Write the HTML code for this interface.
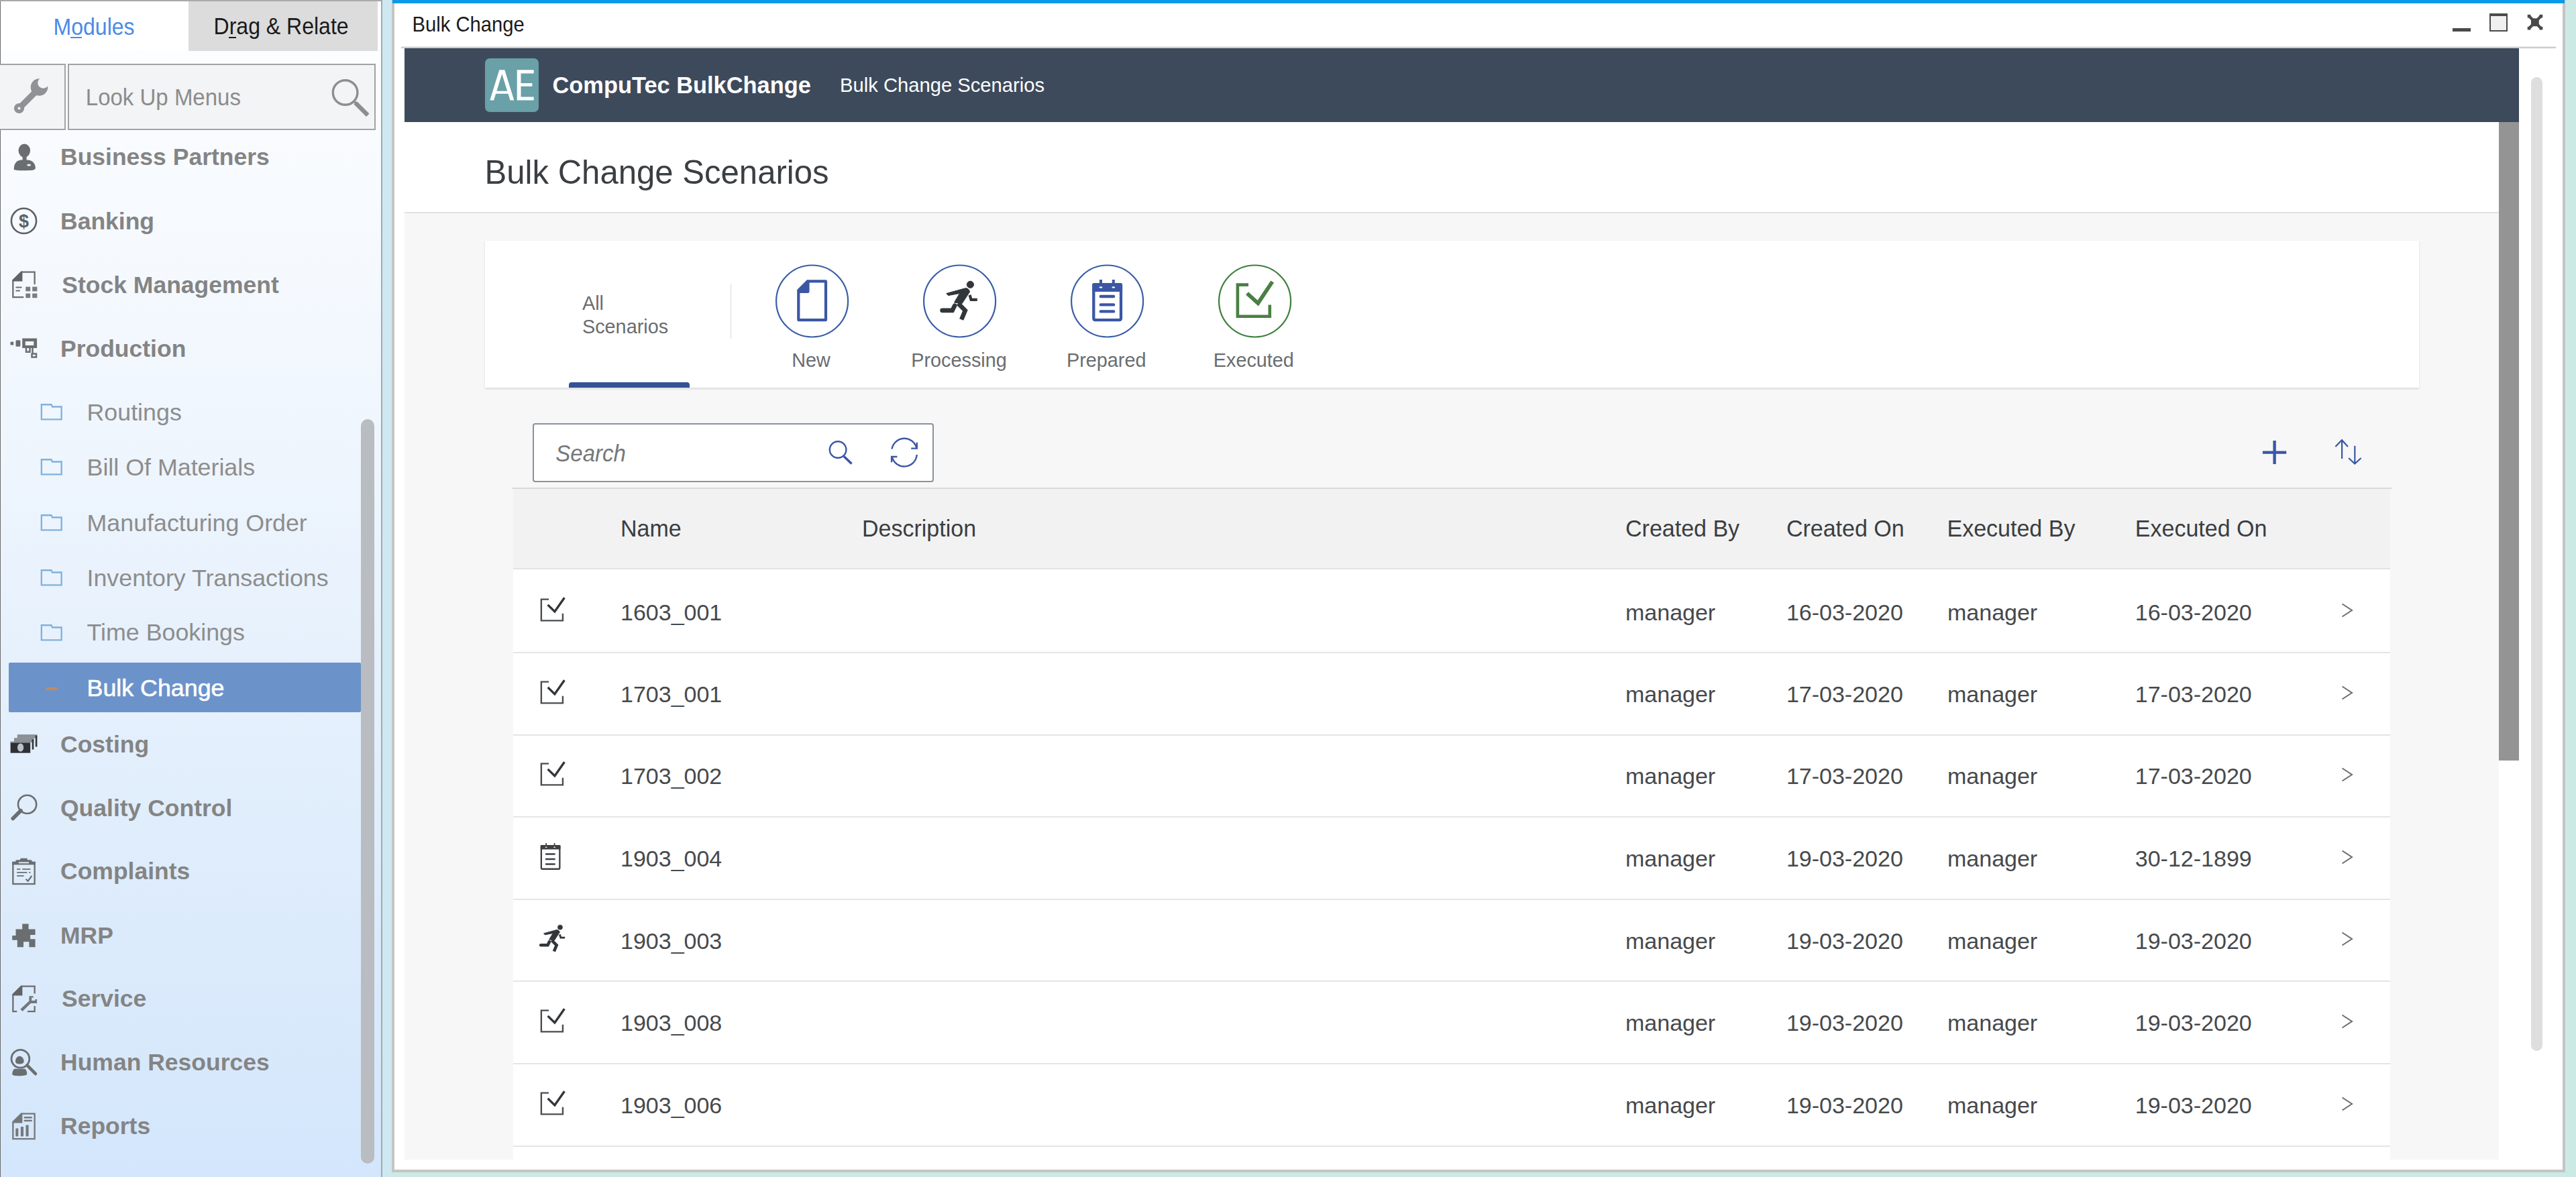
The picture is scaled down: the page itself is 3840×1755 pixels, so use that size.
<!DOCTYPE html>
<html><head><meta charset="utf-8">
<style>
html,body{margin:0;padding:0;width:3840px;height:1755px;overflow:hidden;position:relative;background:#cde9e6;font-family:"Liberation Sans",sans-serif}
.a{position:absolute}
.t{position:absolute;line-height:1;white-space:nowrap;font-family:"Liberation Sans",sans-serif}
.mi{font-size:35.5px;font-weight:bold;color:#848484;left:90px}
.si{font-size:35.8px;color:#8d8d8d;left:129.5px}
.hd{font-size:34px;color:#3a3e42;transform:scaleY(1.03);transform-origin:0 28.8px}
.cell{font-size:34px;color:#46494c}
.lab{font-size:28.8px;color:#6a6d70}
svg{position:absolute;overflow:visible}
</style></head><body>

<!-- ============ LEFT PANEL ============ -->
<div class="a" id="left" style="left:0;top:0;width:570px;height:1755px;background:linear-gradient(#fdfeff 0px,#f3f8fe 500px,#e3effc 1100px,#d3e6fb 1755px)"></div>
<div class="a" style="left:0;top:0;width:1px;height:1755px;background:#6b6b6b"></div>
<div class="a" style="left:0;top:0;width:570px;height:2px;background:#a9a9a9"></div>
<!-- tabs -->
<div class="a" style="left:1px;top:2px;width:280px;height:74px;background:#fff"></div>
<div class="a" style="left:281px;top:2px;width:282px;height:74px;background:#dcdcdc"></div>
<div class="t" style="left:79.6px;top:25px;font-size:32px;color:#4a8be6;transform:scaleY(1.1);transform-origin:0 27px">Modules</div>
<div class="a" style="left:105px;top:54.8px;width:17px;height:1.8px;background:#4a8be6"></div>
<div class="t" style="left:318.6px;top:24px;font-size:32px;color:#1a1a1a;transform:scaleY(1.1);transform-origin:0 27px">Drag &amp; Relate</div>
<div class="a" style="left:341px;top:54.8px;width:11px;height:1.8px;background:#1a1a1a"></div>
<!-- wrench box + lookup -->
<div class="a" style="left:0;top:95px;width:95.5px;height:95px;border:2px solid #a3a3a3;border-left:none;background:#f3f4f6"></div>
<div class="a" style="left:101px;top:95px;width:455px;height:95px;border:2px solid #a3a3a3;background:#f3f4f6"></div>
<div class="t" style="left:127.8px;top:129.2px;font-size:33px;color:#8c8c8c;transform:scaleY(1.08);transform-origin:0 28px">Look Up Menus</div>

<!-- menu items -->
<div class="t mi" style="top:217.3px">Business Partners</div>
<div class="t mi" style="top:313px">Banking</div>
<div class="t mi" style="top:407.5px;left:92.3px">Stock Management</div>
<div class="t mi" style="top:503px">Production</div>
<div class="t si" style="top:597.6px">Routings</div>
<div class="t si" style="top:680px">Bill Of Materials</div>
<div class="t si" style="top:763px">Manufacturing Order</div>
<div class="t si" style="top:844.7px">Inventory Transactions</div>
<div class="t si" style="top:926.3px">Time Bookings</div>
<div class="a" style="left:13px;top:988px;width:525px;height:74px;border-radius:2px;background:#6b93ca"></div>
<div class="a" style="left:68.5px;top:1025.2px;width:17.4px;height:4.2px;background:#c48a5c"></div>
<div class="t si" style="top:1009.4px;color:#fff;-webkit-text-stroke:0.6px #fff">Bulk Change</div>
<div class="t mi" style="top:1093px">Costing</div>
<div class="t mi" style="top:1187.8px">Quality Control</div>
<div class="t mi" style="top:1281.6px">Complaints</div>
<div class="t mi" style="top:1377.5px">MRP</div>
<div class="t mi" style="top:1471.8px;left:92px">Service</div>
<div class="t mi" style="top:1567px">Human Resources</div>
<div class="t mi" style="top:1662.3px">Reports</div>

<!-- left icons -->
<svg style="left:10px;top:205px" width="60" height="60" viewBox="0 0 60 60"><g fill="#6b6e70"><ellipse cx="26.3" cy="19.6" rx="8.8" ry="10.2"/><rect x="23.6" y="26" width="6" height="9"/><path d="M10.7 47 C10.7 38.5 15.5 33.5 22 33.5 H31 C38 33.5 42.8 38.5 42.8 45.5 C42.8 49 37 49.2 26.5 49.2 C15 49.2 10.7 49 10.7 47 Z"/></g><rect x="30.6" y="39.8" width="5.1" height="2.6" fill="#f5f8fc"/></svg>
<svg style="left:10px;top:300px" width="60" height="60" viewBox="0 0 60 60"><circle cx="25.5" cy="29.4" r="18.6" fill="none" stroke="#5e6163" stroke-width="2.6"/><text x="25.5" y="38.6" text-anchor="middle" font-family="Liberation Sans" font-weight="bold" font-size="27" fill="#5e6163">$</text></svg>
<svg style="left:10px;top:395px" width="60" height="60" viewBox="0 0 60 60"><g fill="none" stroke="#6b6e70" stroke-width="2.3"><path d="M9.35 23.5 V48.05 H25.2"/><path d="M22.2 10.55 H41.65 V29"/></g><path d="M8.2 22.5 L21.3 9.4 H23.4 V24.6 H8.2 Z" fill="#616466"/><g fill="#6b6e70"><rect x="13.3" y="32.6" width="9.4" height="2" rx="1"/><rect x="13.3" y="37.4" width="6.8" height="2" rx="1"/></g><g fill="#7b7e81"><rect x="28.3" y="32.6" width="6.9" height="6.7"/><rect x="38.2" y="32.6" width="7.2" height="6.7"/><rect x="28.3" y="42.6" width="6.9" height="6.6"/><rect x="38.2" y="42.6" width="7.2" height="6.6"/></g></svg>
<svg style="left:10px;top:490px" width="60" height="60" viewBox="0 0 60 60"><g fill="#6b6e70"><rect x="5.6" y="19.6" width="4.6" height="4.9"/><rect x="13.5" y="17.3" width="6.9" height="9.5" rx="1.5"/><path fill-rule="evenodd" d="M23.2 14.5 H45.1 V29.1 H23.2 Z M27.8 19.1 V25 H40.3 V19.1 Z"/></g><g fill="none" stroke="#6b6e70" stroke-width="2.5"><path d="M29 29 V34.8 H34.5 V29"/><path d="M38.5 29 V37.5 H44 V42.6 H37.5 V36.5"/></g></svg>

<svg style="left:10px;top:1085px" width="60" height="60" viewBox="0 0 60 60"><rect x="15.8" y="10.2" width="29.6" height="5.6" fill="#8b9096"/><rect x="42.8" y="11.7" width="2.6" height="16.8" fill="#33363a"/><rect x="11" y="15.3" width="29.3" height="6.6" fill="#8b9096"/><rect x="37.7" y="17.3" width="2.6" height="15.3" fill="#33363a"/><rect x="5.6" y="21.4" width="29.6" height="16.3" fill="#2e3134"/><rect x="5.6" y="20.6" width="29.6" height="2" fill="#8b9096"/><ellipse cx="20.6" cy="29.6" rx="4.6" ry="6.2" fill="#b9c3cc"/></svg>
<svg style="left:10px;top:1180px" width="60" height="60" viewBox="0 0 60 60"><circle cx="30.6" cy="19.4" r="13.6" fill="none" stroke="#6b6e70" stroke-width="2.6"/><path d="M21 28.8 L9.2 40.6" stroke="#6b6e70" stroke-width="5.6" stroke-linecap="round"/></svg>
<svg style="left:10px;top:1270px" width="60" height="60" viewBox="0 0 60 60"><rect x="9.35" y="16" width="32.3" height="32.05" fill="none" stroke="#6b6e70" stroke-width="2.3"/><rect x="8.2" y="14.8" width="34.6" height="4.6" fill="#6b6e70"/><rect x="13.3" y="12.2" width="24.4" height="3.5" rx="1.5" fill="#6b6e70"/><rect x="20" y="9.7" width="11" height="3.5" rx="1.5" fill="#6b6e70"/><rect x="17.8" y="15.4" width="15.2" height="1.9" fill="#e6effa"/><g stroke="#7a7d80" stroke-width="2.1" stroke-linecap="round"><path d="M16 26 H19.5 M24 26 H34.5 M16 31 H29.6 M34 31 H34.6 M16 36 H24.8"/></g><path d="M28.6 40.8 L31.6 43.8 L37.3 36" fill="none" stroke="#6b6e70" stroke-width="2.2"/></svg>
<svg style="left:10px;top:1365px" width="60" height="60" viewBox="0 0 60 60"><path d="M23.2 12.5 H32.6 V20.4 H42.6 V29.1 H35.2 V35.2 H42.6 V47.2 H33.4 V39.3 H25 V47.2 H15.8 V36.7 H8.2 V30.1 H13.5 V20.4 H23.2 Z" fill="#6b6e70"/></svg>
<svg style="left:10px;top:1460px" width="60" height="60" viewBox="0 0 60 60"><path d="M8.2 22.5 L21.3 9.4 H23.4 V24.6 H8.2 Z" fill="#616466"/><g fill="none" stroke="#6b6e70" stroke-width="2.3"><path d="M22.2 10.55 H41.65 V21.5"/><path d="M9.35 23.5 V48.05 H15.3"/><path d="M31 48.05 H41.65 V40"/></g><path d="M33.4 25.2 H39.8 V27.6 H37.2 V31.9 H42.3 V29.9 H45.1 V36 H35.8 L23.6 48 L20.3 44.8 L33.4 32.4 Z" fill="#74777a"/></svg>
<svg style="left:10px;top:1555px" width="60" height="60" viewBox="0 0 60 60"><circle cx="20.4" cy="23.7" r="13.4" fill="none" stroke="#6b6e70" stroke-width="2.8"/><path d="M19.2 19.8 C23 19.8 25.6 24 25.6 27.3 C25.6 30.6 23 31.6 19.2 31.6 C15.4 31.6 13 30.6 13 27.3 C13 24 15.4 19.8 19.2 19.8 Z" fill="#6b6e70"/><path d="M11.5 38.7 H27 C29.5 40 30.2 44 30.2 46 C30.2 48.6 25 49.2 19 49.2 C12.5 49.2 8.2 48.6 8.2 46.5 C8.2 43.5 9.5 40 11.5 38.7 Z" fill="#6b6e70"/><path d="M30.4 33.4 L43 46.2" stroke="#6b6e70" stroke-width="4.6" stroke-linecap="round"/></svg>
<svg style="left:10px;top:1650px" width="60" height="60" viewBox="0 0 60 60"><path d="M8.2 22.5 L21.3 9.4 H23.4 V24.6 H8.2 Z" fill="#75787b"/><path d="M22.2 10.55 H41.65 V48.05 H9.35 V23.5" fill="none" stroke="#75787b" stroke-width="2.3"/><g stroke="#75787b" stroke-width="2.4" stroke-linecap="round"><path d="M26.8 16.3 H36.8 M26.8 21 H36.8"/></g><g fill="#75787b"><rect x="13.3" y="32.6" width="4" height="11.8" rx="0.8"/><rect x="20.9" y="30.1" width="4.1" height="14.3" rx="0.8"/><rect x="28.5" y="27.5" width="4.1" height="16.9" rx="0.8"/></g></svg>

<!-- folders -->
<svg style="left:50px;top:584.9px" width="60" height="60" viewBox="0 0 60 60"><path d="M11.85 18.25 H26.5 L28 21.5 H41.65 V40.35 H11.85 Z" fill="none" stroke="#80b1dc" stroke-width="2.3" stroke-linejoin="miter"/></svg>
<svg style="left:50px;top:667.3px" width="60" height="60" viewBox="0 0 60 60"><path d="M11.85 18.25 H26.5 L28 21.5 H41.65 V40.35 H11.85 Z" fill="none" stroke="#80b1dc" stroke-width="2.3" stroke-linejoin="miter"/></svg>
<svg style="left:50px;top:750.3px" width="60" height="60" viewBox="0 0 60 60"><path d="M11.85 18.25 H26.5 L28 21.5 H41.65 V40.35 H11.85 Z" fill="none" stroke="#80b1dc" stroke-width="2.3" stroke-linejoin="miter"/></svg>
<svg style="left:50px;top:832.0px" width="60" height="60" viewBox="0 0 60 60"><path d="M11.85 18.25 H26.5 L28 21.5 H41.65 V40.35 H11.85 Z" fill="none" stroke="#80b1dc" stroke-width="2.3" stroke-linejoin="miter"/></svg>
<svg style="left:50px;top:913.6px" width="60" height="60" viewBox="0 0 60 60"><path d="M11.85 18.25 H26.5 L28 21.5 H41.65 V40.35 H11.85 Z" fill="none" stroke="#80b1dc" stroke-width="2.3" stroke-linejoin="miter"/></svg>
<!-- wrench -->
<svg style="left:0;top:95px" width="100" height="100" viewBox="0 0 100 100"><path d="M29 66 L54 41" stroke="#909295" stroke-width="9" stroke-linecap="round"/><circle cx="28.5" cy="66.5" r="7.6" fill="#909295"/><circle cx="28.5" cy="66.5" r="2" fill="#f3f4f6"/><circle cx="58.5" cy="35" r="12.8" fill="#909295"/><circle cx="64.5" cy="28.5" r="8.3" fill="#f3f4f6"/></svg>
<!-- lookup search icon -->
<svg style="left:480px;top:100px" width="80" height="90" viewBox="0 0 80 90"><circle cx="34.6" cy="38" r="18.3" fill="none" stroke="#8e8e8e" stroke-width="3.4"/><path d="M47.5 51 L52 55.5" stroke="#8e8e8e" stroke-width="3.4"/><path d="M52 55.5 L66 69.5" stroke="#8e8e8e" stroke-width="6.5" stroke-linecap="square"/></svg>

<!-- left scrollbar + border -->
<div class="a" style="left:537.5px;top:624.5px;width:20.5px;height:1110px;border-radius:10px;background:#b9bcc0"></div>
<div class="a" style="left:567.8px;top:0;width:2.2px;height:1755px;background:#a3a9ae"></div>
<div class="a" style="left:570px;top:0;width:13.5px;height:1755px;background:#cde8f1"></div>

<!-- ============ WINDOW ============ -->
<div class="a" id="win" style="left:583.5px;top:0;width:3240.5px;height:1748px;background:#fff;box-sizing:border-box;border:4px solid #c4c4c4;border-top:none"></div>
<div class="a" style="left:585px;top:0;width:3238px;height:4.6px;background:#0a9be8"></div>
<div class="t" style="left:614.5px;top:22.8px;font-size:29.2px;color:#1a1a1a;transform:scaleY(1.06);transform-origin:0 24.7px">Bulk Change</div>
<!-- window controls -->
<div class="a" style="left:3655.5px;top:41.5px;width:27px;height:5px;background:#4a4a4a"></div>
<div class="a" style="left:3710.7px;top:19.5px;width:27px;height:27px;box-sizing:border-box;border:2px solid #4a4a4a;border-top-width:4px;background:#f0f0f0"></div>
<svg style="left:3767px;top:22px" width="24" height="23" viewBox="0 0 24 23"><g fill="#4a4a4a"><rect x="0.7" y="-0.2" width="4.7" height="4.7"/><rect x="18.6" y="-0.2" width="4.7" height="4.7"/><rect x="0.7" y="17.8" width="4.7" height="4.7"/><rect x="18.6" y="17.8" width="4.7" height="4.7"/><rect x="6" y="5.4" width="11.8" height="11.8"/></g><path d="M3 2 L20.9 20.2 M20.9 2 L3 20.2" stroke="#4a4a4a" stroke-width="4.2"/></svg>

<div class="a" style="left:598px;top:69px;width:3212px;height:3px;background:linear-gradient(#f0f0f0,#b9b9b9)"></div>
<!-- dark header -->
<div class="a" style="left:603px;top:72px;width:3152px;height:110px;background:#3d4a5c"></div>
<div class="a" style="left:723px;top:87px;width:80px;height:80px;border-radius:7px;background:#6aa0a8"></div>
<svg style="left:715px;top:80px" width="100" height="95" viewBox="0 0 100 95"><path fill="#fff" fill-rule="evenodd" d="M15.3 69.4 L29.3 24.2 H37.3 L51.3 69.4 H45.5 L42.5 59.7 H24.1 L21.1 69.4 Z M25.4 55.7 H41.2 L33.3 30.2 Z"/><path fill="#fff" d="M55.7 24.2 H80.7 V29.4 H61.5 V44 H78.4 V48.8 H61.5 V64.6 H80.7 V69.4 H55.7 Z"/></svg>
<div class="t" style="left:823.5px;top:110px;font-size:34.4px;font-weight:bold;color:#fff;transform:scaleY(1.03);transform-origin:0 29px">CompuTec BulkChange</div>
<div class="t" style="left:1252px;top:113.3px;font-size:29.2px;color:#fff">Bulk Change Scenarios</div>

<!-- content -->
<div class="a" style="left:603px;top:182px;width:3122px;height:135px;background:#fff"></div>
<div class="a" style="left:603px;top:317px;width:3122px;height:1412px;background:#f7f7f7"></div>
<div class="a" style="left:603px;top:316px;width:3122px;height:2px;background:#e2e2e2"></div>
<div class="t" style="left:722.5px;top:233px;font-size:49.1px;color:#3b3f43">Bulk Change Scenarios</div>

<!-- inner scrollbar -->
<div class="a" style="left:3725px;top:182px;width:30px;height:952px;background:#949494"></div>
<!-- outer scrollbar -->
<div class="a" style="left:3773px;top:115px;width:17px;height:1452px;border-radius:9px;background:#dedede"></div>

<!-- tab card -->
<div class="a" style="left:723px;top:359px;width:2883px;height:218.5px;background:#fff;box-shadow:0 2px 3px rgba(0,0,0,0.12)"></div>
<div class="t lab" style="left:868px;top:438.1px">All</div>
<div class="t lab" style="left:868px;top:472.6px">Scenarios</div>
<div class="a" style="left:1088.5px;top:424px;width:1.5px;height:81px;background:#d9d9d9"></div>
<div class="a" style="left:848px;top:570px;width:180px;height:7.5px;border-radius:4px 4px 0 0;background:#345296"></div>

<!-- circles -->
<svg style="left:1156px;top:394px" width="110" height="110"><circle cx="54.6" cy="55" r="53.5" fill="none" stroke="#3a5ea8" stroke-width="2.2"/></svg>
<svg style="left:1376px;top:394px" width="110" height="110"><circle cx="54.6" cy="55" r="53.5" fill="none" stroke="#3a5ea8" stroke-width="2.2"/></svg>
<svg style="left:1596px;top:394px" width="110" height="110"><circle cx="54.6" cy="55" r="53.5" fill="none" stroke="#3a5ea8" stroke-width="2.2"/></svg>
<svg style="left:1816px;top:394px" width="110" height="110"><circle cx="54.6" cy="55" r="53.5" fill="none" stroke="#3f7f3f" stroke-width="2.2"/></svg>
<div class="t lab" style="left:1180.3px;top:523.1px">New</div>
<div class="t lab" style="left:1358.3px;top:523.1px">Processing</div>
<div class="t lab" style="left:1590px;top:523.1px">Prepared</div>
<div class="t lab" style="left:1808.8px;top:523.1px">Executed</div>

<!-- toolbar -->
<div class="a" style="left:794px;top:630.5px;width:598px;height:88px;box-sizing:border-box;border:2px solid #89929c;border-radius:4px;background:#fff"></div>
<div class="t" style="left:828.3px;top:659.6px;font-size:33px;font-style:italic;color:#74777a;transform:scaleY(1.05);transform-origin:0 28px">Search</div>

<!-- defs -->
<svg width="0" height="0" style="position:absolute"><defs>
<symbol id="runner" viewBox="0 0 120 120"><circle cx="76.4" cy="34.3" r="5.1"/><path d="M40.8 47.6 L68 40 Q72.5 38.8 74.5 42.5 L75.6 45 L64 62.8 L52.5 61 L60.5 47.5 L43.6 50.6 Z"/><path d="M75.6 49.8 L77.6 56.8 H86.8" fill="none" stroke-width="4.2"/><path d="M53.2 65.6 L49.6 72.9 H34.6" fill="none" stroke-width="6.6" stroke-linecap="round"/><path d="M58.2 62.4 L68.8 73 L63.2 86.4" fill="none" stroke-width="6.6"/></symbol>
<symbol id="chkrow" viewBox="0 0 60 60"><path d="M23 13.65 H11.85 V45.35 H43.95 V34.7" fill="none" stroke="#4a4d50" stroke-width="2.4"/><path d="M21.6 21.9 L31.9 32 L46.4 11.2" fill="none" stroke="#32363a" stroke-width="3.4"/></symbol>
<symbol id="calrow" viewBox="0 0 60 60"><rect x="11.85" y="13.2" width="27.5" height="34.55" rx="1.2" fill="none" stroke="#3d4043" stroke-width="2.3"/><rect x="10.7" y="12" width="29.8" height="6.6" rx="1" fill="#3d4043"/><rect x="18.2" y="9.2" width="1.8" height="4" fill="#3d4043"/><rect x="30.7" y="9.2" width="1.8" height="4" fill="#3d4043"/><ellipse cx="19.1" cy="15.3" rx="1.5" ry="0.8" fill="#fff"/><ellipse cx="31.6" cy="15.3" rx="1.5" ry="0.8" fill="#fff"/><g stroke="#3d4043" stroke-width="2.3" stroke-linecap="round"><path d="M18.9 25.5 H31.8 M18.9 33 H31.8 M18.9 40.5 H31.8"/></g></symbol>
</defs></svg>

<!-- circle icons -->
<svg style="left:1150px;top:390px" width="120" height="120" viewBox="0 0 120 120"><path fill-rule="evenodd" fill="#3b57a4" d="M53 27.2 H80.5 Q83.1 27.2 83.1 29.8 V86.6 Q83.1 89.2 80.5 89.2 H40.8 Q38.2 89.2 38.2 86.6 V42 Z M42.4 46.9 V85 H78.9 V31.4 H56.6 V44.4 Q56.6 46.9 54.1 46.9 Z"/></svg>
<svg style="left:1370px;top:390px" width="120" height="120" viewBox="0 0 120 120" fill="#32363a" stroke="#32363a"><use href="#runner"/></svg>
<svg style="left:1590px;top:390px" width="120" height="120" viewBox="0 0 120 120"><rect x="40.3" y="34.2" width="40.7" height="52.9" rx="2" fill="none" stroke="#3b57a4" stroke-width="4.3"/><rect x="38.2" y="32.1" width="44.9" height="12.8" rx="2.5" fill="#3b57a4"/><rect x="49" y="27" width="4" height="6" fill="#3b57a4"/><rect x="67.8" y="27" width="4" height="6" fill="#3b57a4"/><ellipse cx="51" cy="38.4" rx="2.4" ry="1.2" fill="#fff"/><ellipse cx="69.8" cy="38.4" rx="2.4" ry="1.2" fill="#fff"/><g stroke="#3b57a4" stroke-width="4.4" stroke-linecap="round"><path d="M50.8 52 H70.1 M50.8 64.4 H70.1 M50.8 74.4 H70.1"/></g></svg>
<svg style="left:1810px;top:390px" width="120" height="120" viewBox="0 0 120 120"><path d="M51 34.65 H34.9 V81.8 H82.8 V64.4" fill="none" stroke="#4b7f45" stroke-width="4.6"/><path d="M49 47.4 L65.3 62.2 L86.7 30" fill="none" stroke="#4b7f45" stroke-width="5.8"/></svg>

<!-- toolbar icons -->
<svg style="left:1225px;top:645px" width="160" height="60" viewBox="0 0 160 60"><circle cx="24.1" cy="25.5" r="12.3" fill="none" stroke="#3b57a4" stroke-width="2.4"/><path d="M33 35.5 L44.5 46.5" stroke="#3b57a4" stroke-width="3.6"/><g fill="none" stroke="#3b57a4" stroke-width="2.4"><path d="M104.5 24.5 A18.8 18.8 0 0 1 141.2 22.6"/><path d="M141.8 14.8 V23.6 H133.2"/><path d="M141.7 33 A18.8 18.8 0 0 1 104.8 36.6"/><path d="M104.1 44.2 V36 H112.4"/></g></svg>
<svg style="left:3360px;top:640px" width="180" height="65" viewBox="0 0 180 65"><g stroke="#3b57a4" stroke-width="4.4"><path d="M30.6 17.1 V52.1 M12.9 34.6 H48.2"/></g><g fill="none" stroke="#3b57a4" stroke-width="2.2"><path d="M131.1 16.5 V44 M121.4 26 L131 16.2 L140 26"/><path d="M150.3 24.8 V51 M141.2 43 L150.2 51.6 L159.6 43"/></g></svg>

<!-- table -->
<div class="a" style="left:765px;top:728px;width:2798px;height:1001px;background:#fff"></div>
<div class="a" style="left:763px;top:727px;width:2802px;height:2px;background:#d9d9d9"></div>
<div class="a" style="left:765px;top:729px;width:2798px;height:119px;background:#f2f2f2"></div>
<div class="t hd" style="left:925px;top:770.6px">Name</div>
<div class="t hd" style="left:1285px;top:770.6px">Description</div>
<div class="t hd" style="left:2423px;top:770.6px">Created By</div>
<div class="t hd" style="left:2662.9px;top:770.6px">Created On</div>
<div class="t hd" style="left:2902.5px;top:770.6px">Executed By</div>
<div class="t hd" style="left:3182.8px;top:770.6px">Executed On</div>

<!--ROWS-->
<svg style="left:795px;top:880.0px" width="60" height="60" viewBox="0 0 60 60"><use href="#chkrow"/></svg>
<div class="t cell" style="left:925px;top:895.6px">1603_001</div>
<div class="t cell" style="left:2423px;top:895.6px">manager</div>
<div class="t cell" style="left:2662.9px;top:895.6px">16-03-2020</div>
<div class="t cell" style="left:2903px;top:895.6px">manager</div>
<div class="t cell" style="left:3182.8px;top:895.6px">16-03-2020</div>
<svg style="left:3490px;top:899.4px" width="18" height="24" viewBox="0 0 18 24"><path d="M1.5 1.5 L16 11 L1.5 20.5" fill="none" stroke="#6a6d70" stroke-width="2"/></svg>
<div class="a" style="left:765px;top:972.0px;width:2798px;height:2px;background:#e5e5e5"></div>
<svg style="left:795px;top:1002.8px" width="60" height="60" viewBox="0 0 60 60"><use href="#chkrow"/></svg>
<div class="t cell" style="left:925px;top:1017.8px">1703_001</div>
<div class="t cell" style="left:2423px;top:1017.8px">manager</div>
<div class="t cell" style="left:2662.9px;top:1017.8px">17-03-2020</div>
<div class="t cell" style="left:2903px;top:1017.8px">manager</div>
<div class="t cell" style="left:3182.8px;top:1017.8px">17-03-2020</div>
<svg style="left:3490px;top:1021.6px" width="18" height="24" viewBox="0 0 18 24"><path d="M1.5 1.5 L16 11 L1.5 20.5" fill="none" stroke="#6a6d70" stroke-width="2"/></svg>
<div class="a" style="left:765px;top:1094.6px;width:2798px;height:2px;background:#e5e5e5"></div>
<svg style="left:795px;top:1125.4px" width="60" height="60" viewBox="0 0 60 60"><use href="#chkrow"/></svg>
<div class="t cell" style="left:925px;top:1140.4px">1703_002</div>
<div class="t cell" style="left:2423px;top:1140.4px">manager</div>
<div class="t cell" style="left:2662.9px;top:1140.4px">17-03-2020</div>
<div class="t cell" style="left:2903px;top:1140.4px">manager</div>
<div class="t cell" style="left:3182.8px;top:1140.4px">17-03-2020</div>
<svg style="left:3490px;top:1144.2px" width="18" height="24" viewBox="0 0 18 24"><path d="M1.5 1.5 L16 11 L1.5 20.5" fill="none" stroke="#6a6d70" stroke-width="2"/></svg>
<div class="a" style="left:765px;top:1217.2px;width:2798px;height:2px;background:#e5e5e5"></div>
<svg style="left:795px;top:1248.0px" width="60" height="60" viewBox="0 0 60 60"><use href="#calrow"/></svg>
<div class="t cell" style="left:925px;top:1263.0px">1903_004</div>
<div class="t cell" style="left:2423px;top:1263.0px">manager</div>
<div class="t cell" style="left:2662.9px;top:1263.0px">19-03-2020</div>
<div class="t cell" style="left:2903px;top:1263.0px">manager</div>
<div class="t cell" style="left:3182.8px;top:1263.0px">30-12-1899</div>
<svg style="left:3490px;top:1266.8px" width="18" height="24" viewBox="0 0 18 24"><path d="M1.5 1.5 L16 11 L1.5 20.5" fill="none" stroke="#6a6d70" stroke-width="2"/></svg>
<div class="a" style="left:765px;top:1339.8px;width:2798px;height:2px;background:#e5e5e5"></div>
<svg style="left:805px;top:1379.2px" width="38" height="40.7" viewBox="33 29 55 59" fill="#32363a" stroke="#32363a"><use href="#runner" width="120" height="120"/></svg>
<div class="t cell" style="left:925px;top:1385.6px">1903_003</div>
<div class="t cell" style="left:2423px;top:1385.6px">manager</div>
<div class="t cell" style="left:2662.9px;top:1385.6px">19-03-2020</div>
<div class="t cell" style="left:2903px;top:1385.6px">manager</div>
<div class="t cell" style="left:3182.8px;top:1385.6px">19-03-2020</div>
<svg style="left:3490px;top:1389.4px" width="18" height="24" viewBox="0 0 18 24"><path d="M1.5 1.5 L16 11 L1.5 20.5" fill="none" stroke="#6a6d70" stroke-width="2"/></svg>
<div class="a" style="left:765px;top:1462.4px;width:2798px;height:2px;background:#e5e5e5"></div>
<svg style="left:795px;top:1493.2px" width="60" height="60" viewBox="0 0 60 60"><use href="#chkrow"/></svg>
<div class="t cell" style="left:925px;top:1508.2px">1903_008</div>
<div class="t cell" style="left:2423px;top:1508.2px">manager</div>
<div class="t cell" style="left:2662.9px;top:1508.2px">19-03-2020</div>
<div class="t cell" style="left:2903px;top:1508.2px">manager</div>
<div class="t cell" style="left:3182.8px;top:1508.2px">19-03-2020</div>
<svg style="left:3490px;top:1512.0px" width="18" height="24" viewBox="0 0 18 24"><path d="M1.5 1.5 L16 11 L1.5 20.5" fill="none" stroke="#6a6d70" stroke-width="2"/></svg>
<div class="a" style="left:765px;top:1585.0px;width:2798px;height:2px;background:#e5e5e5"></div>
<svg style="left:795px;top:1615.8px" width="60" height="60" viewBox="0 0 60 60"><use href="#chkrow"/></svg>
<div class="t cell" style="left:925px;top:1630.8px">1903_006</div>
<div class="t cell" style="left:2423px;top:1630.8px">manager</div>
<div class="t cell" style="left:2662.9px;top:1630.8px">19-03-2020</div>
<div class="t cell" style="left:2903px;top:1630.8px">manager</div>
<div class="t cell" style="left:3182.8px;top:1630.8px">19-03-2020</div>
<svg style="left:3490px;top:1634.6px" width="18" height="24" viewBox="0 0 18 24"><path d="M1.5 1.5 L16 11 L1.5 20.5" fill="none" stroke="#6a6d70" stroke-width="2"/></svg>
<div class="a" style="left:765px;top:1707.6px;width:2798px;height:2px;background:#e5e5e5"></div>
<div class="a" style="left:765px;top:847.4px;width:2798px;height:2px;background:#e3e3e3"></div>
<!--/ROWS-->
</body></html>
